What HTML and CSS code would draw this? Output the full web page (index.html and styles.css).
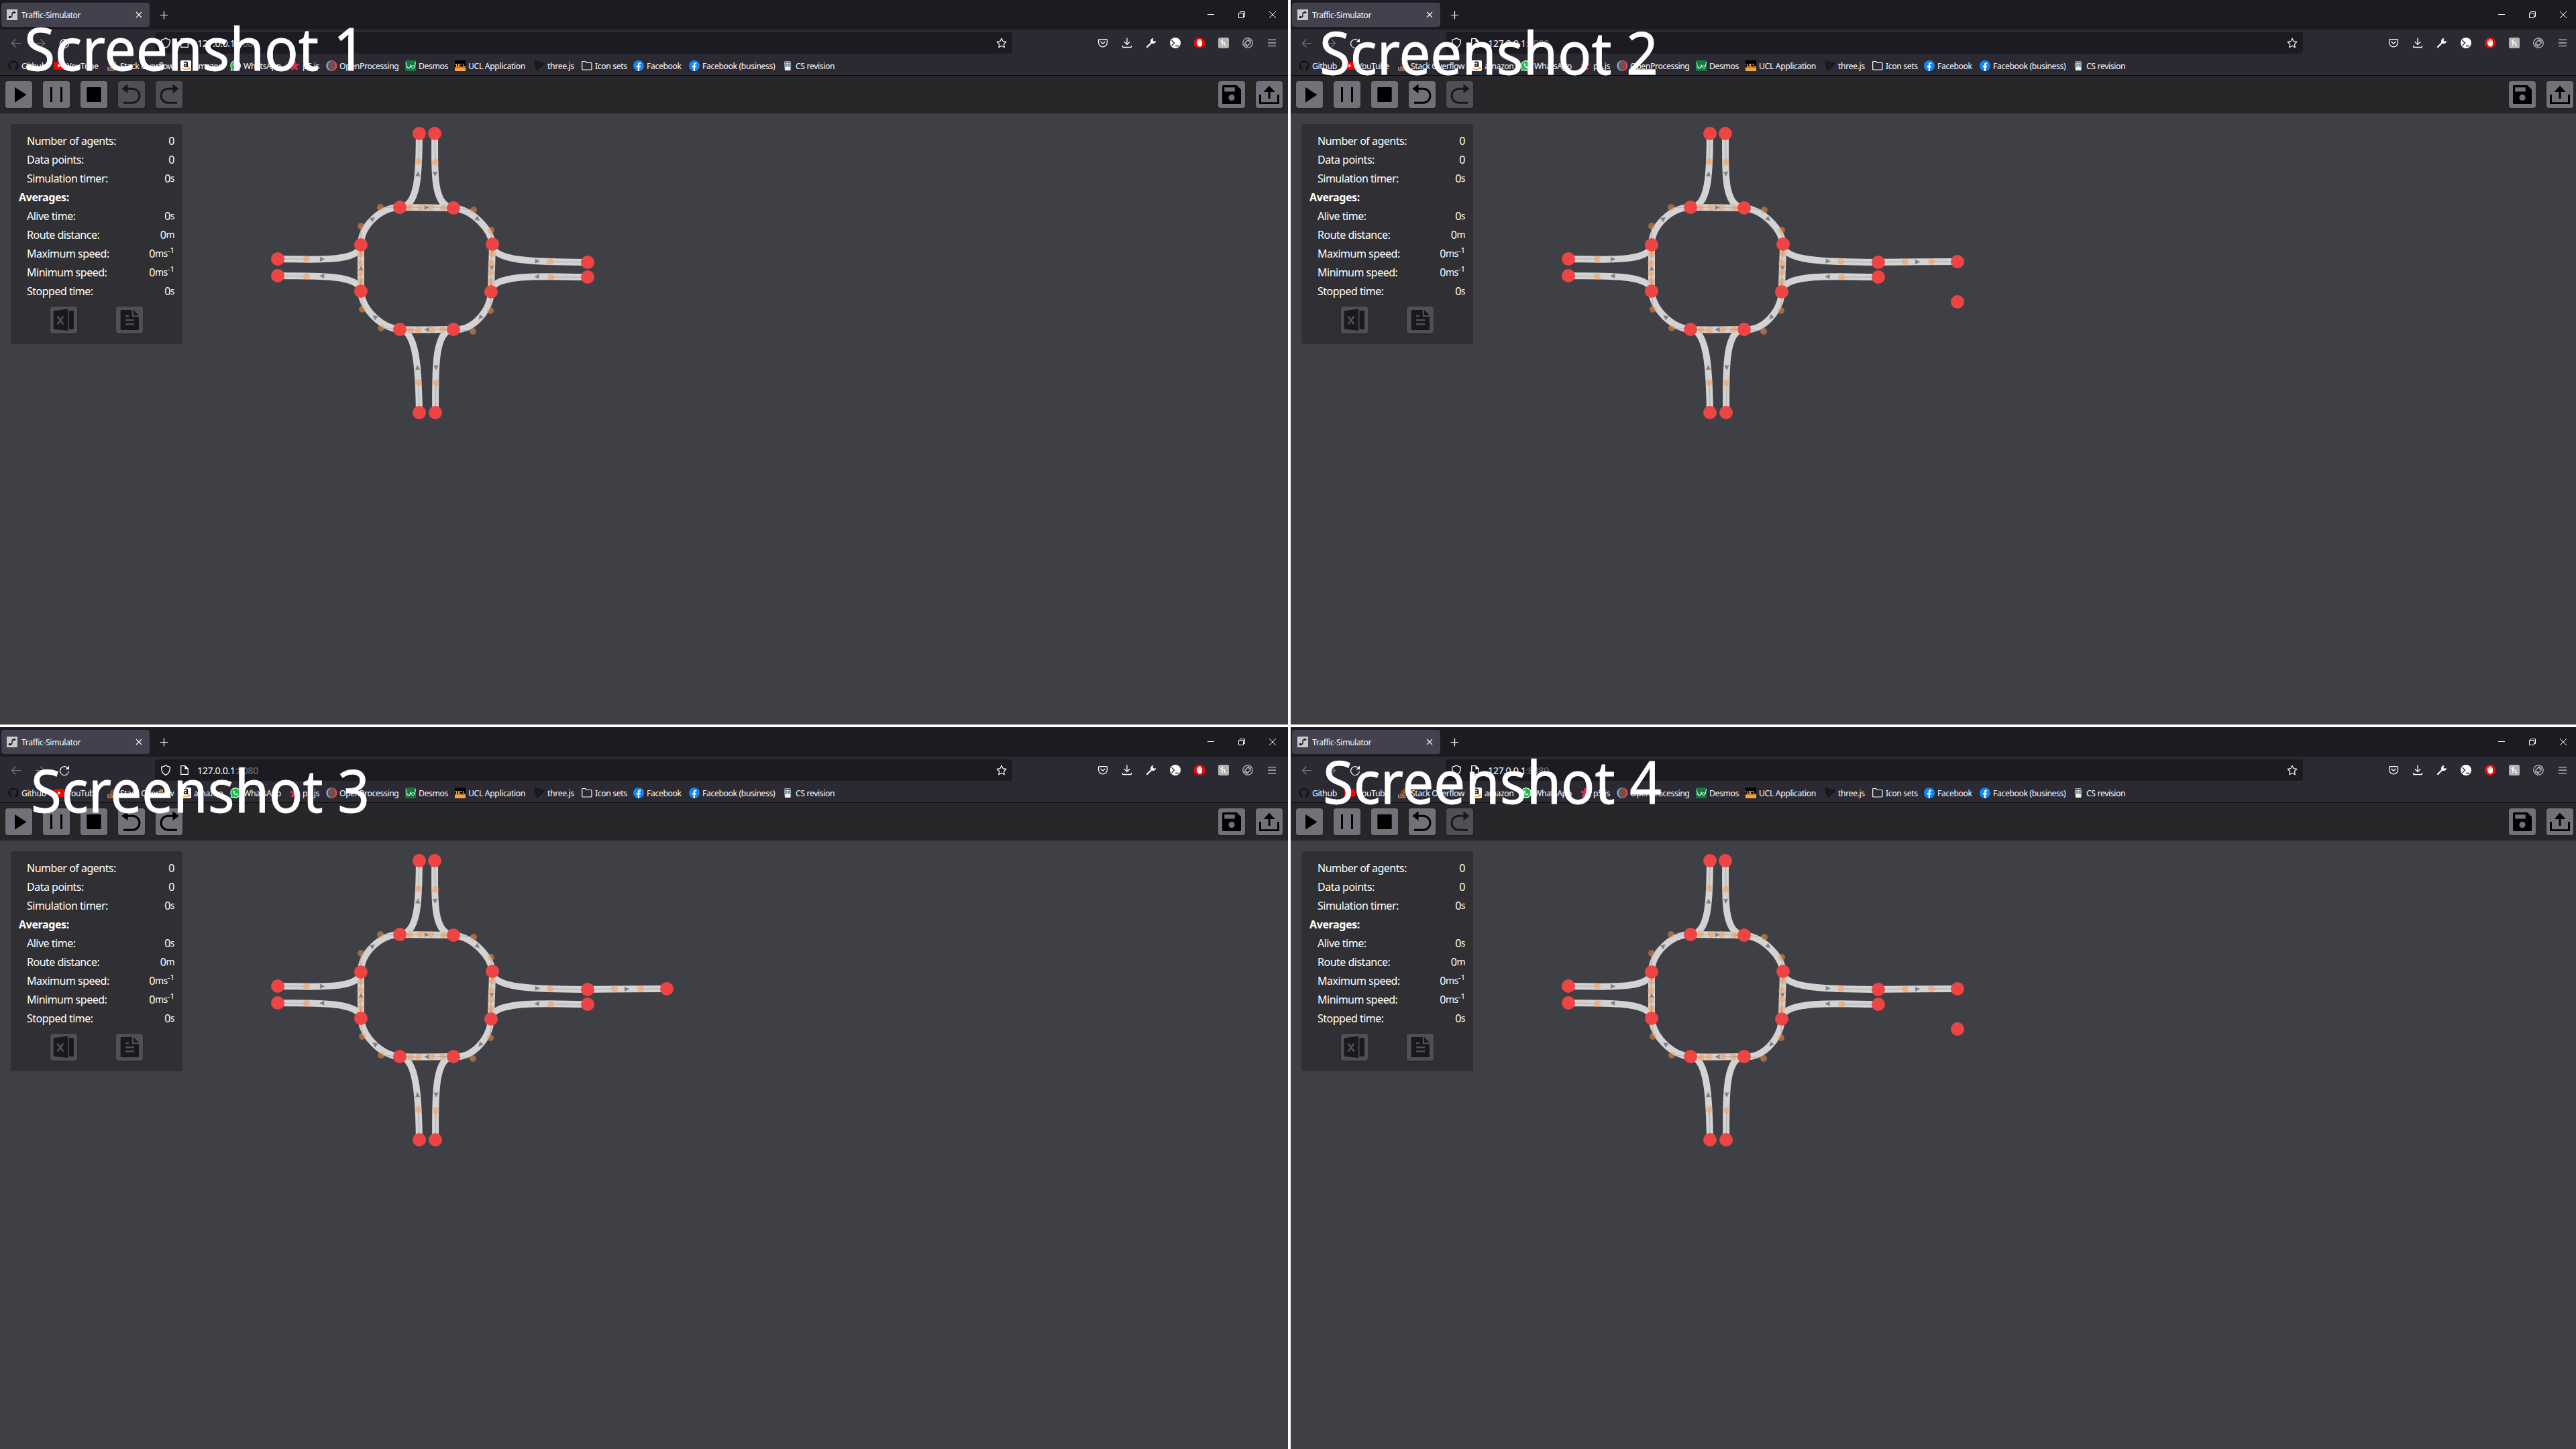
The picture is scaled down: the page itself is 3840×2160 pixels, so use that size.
FILE: index.html
```html
<!DOCTYPE html>
<html lang="en">
<head>
<meta charset="utf-8">
<title>Traffic-Simulator</title>
<link rel="stylesheet" href="styles.css">
</head>
<body>
<svg class="defs" width="0" height="0">
  <symbol id="i-route" viewBox="0 0 16 16"><rect width="16" height="16" fill="#c9c9c9"/><path d="M4.5 11.5H6.5Q8 11.5 8 9V7Q8 4.500 10 4.500H11.500" fill="none" stroke="#111" stroke-width="1.300"/><circle cx="4.500" cy="11.500" r="1.700" fill="#111"/><path d="M10.500 2.500L14 4.500L10.500 6.500Z" fill="#111"/></symbol>
  <symbol id="i-x" viewBox="0 0 16 16"><path d="M4 4L12 12M12 4L4 12" stroke="#fbfbfe" stroke-width="1.100"/></symbol>
  <symbol id="i-plus" viewBox="0 0 16 16"><path d="M2.500 8.500H14M8.500 2.500V14.500" stroke="#fbfbfe" stroke-width="1.200"/></symbol>
  <symbol id="i-min" viewBox="0 0 16 16"><path d="M3 7.500H13" stroke="#fff"/></symbol>
  <symbol id="i-restore" viewBox="0 0 16 16"><path d="M3.500 5.500H10.500V12.500H3.500ZM5.500 5V3.500H12.500V10.500H11" fill="none" stroke="#fff"/></symbol>
  <symbol id="i-close" viewBox="0 0 16 16"><path d="M3 3L13 13M13 3L3 13" stroke="#fff"/></symbol>
  <symbol id="i-back" viewBox="0 0 16 16"><path d="M15 8.500H1.500M7.500 2.500L1.500 8.500L7.500 14.500" fill="none" stroke="#77767e" stroke-width="1.200"/></symbol>
  <symbol id="i-forward" viewBox="0 0 16 16"><path d="M1 8.500H14.500M8.500 2.500L14.500 8.500L8.500 14.500" fill="none" stroke="#77767e" stroke-width="1.200"/></symbol>
  <symbol id="i-reload" viewBox="0 0 16 16"><path d="M13.500 5.500A6.500 6.500 0 1 0 14.500 10" fill="none" stroke="#fbfbfe" stroke-width="1.300"/><path d="M15 1.500V7H9.500Z" fill="#fbfbfe"/></symbol>
  <symbol id="i-shield" viewBox="0 0 16 16"><path d="M8 .7C10 2.400 12.500 3 14.300 3.300C14.600 9 12.500 13.500 8 15.400C3.500 13.500 1.400 9 1.700 3.300C3.500 3 6 2.400 8 .7Z" fill="none" stroke="#fbfbfe" stroke-width="1.300"/></symbol>
  <symbol id="i-page" viewBox="0 0 16 16"><path d="M2.700 1.600H9L13.300 6V14.400H2.700Z" fill="none" stroke="#fbfbfe" stroke-width="1.300" stroke-linejoin="round"/><path d="M8.500 1V6.500H14Z" fill="#fbfbfe"/></symbol>
  <symbol id="i-star" viewBox="0 0 16 16"><path d="M8 1.200L10.100 5.600L14.900 6.300L11.400 9.700L12.200 14.700L8 12.300L3.800 14.700L4.600 9.700L1.100 6.300L5.900 5.600Z" fill="none" stroke="#fbfbfe" stroke-width="1.200" stroke-linejoin="round"/></symbol>
  <symbol id="i-pocket" viewBox="0 0 16 16"><path d="M2.700 2.600H13.300Q14.400 2.600 14.400 3.700V7.500A6.400 6.400 0 0 1 1.600 7.500V3.700Q1.600 2.600 2.700 2.600ZM5 6.300L8 9.200L11 6.300" fill="none" stroke="#fbfbfe" stroke-width="1.300" stroke-linecap="round"/></symbol>
  <symbol id="i-download" viewBox="0 0 16 16"><path d="M8 .5V10M3.800 6.200L8 10.400L12.200 6.200M1.500 12V13.500Q1.500 14.500 2.500 14.500H13.500Q14.500 14.500 14.500 13.500V12" fill="none" stroke="#fbfbfe" stroke-width="1.300"/></symbol>
  <symbol id="i-wrench" viewBox="0 0 16 16"><path d="M2 14L9 7" stroke="#fbfbfe" stroke-width="2.300" stroke-linecap="round"/><path d="M11.500 1A4 4 0 1 0 15 4.800L12.300 6L10.300 4Z" fill="#fbfbfe"/></symbol>
  <symbol id="i-term" viewBox="0 0 16 16"><circle cx="8" cy="8" r="8" fill="#fff"/><path d="M2.500 4L6.500 8L2.500 12M8 12.500H13" fill="none" stroke="#222" stroke-width="1.300"/></symbol>
  <symbol id="i-hand" viewBox="0 0 16 16"><path d="M4.700 0H11.300L16 4.700V11.300L11.300 16H4.700L0 11.300V4.700Z" fill="#e40d0d"/><path d="M5 5V9M7 3V9M9 3V9M11 5V9" stroke="#fff" stroke-width="1.600" stroke-linecap="round"/><path d="M4.200 7.500H12V10Q11.500 13.500 8 13.500Q5.500 13 4.200 9Z" fill="#fff"/></symbol>
  <symbol id="i-honey" viewBox="0 0 16 16"><rect width="16" height="16" rx="2.500" fill="#b3b3b3"/><path d="M3.500 5.500Q7 5 6.500 3Q5.500 3 6 12M6.200 9Q8.500 6 9.500 8Q9 13 12 11.500" fill="none" stroke="#fff" stroke-width="1.300"/></symbol>
  <symbol id="i-shutter" viewBox="0 0 16 16"><circle cx="8" cy="8" r="7.200" fill="none" stroke="#aaa" stroke-width="1.500"/><path d="M4 12V8L9.500 2.500M7 4H10V7M12 4V8L6.500 13.500M9 12H6V9" fill="none" stroke="#c4c4c4" stroke-width="1.300"/></symbol>
  <symbol id="i-menu" viewBox="0 0 16 16"><path d="M2 3.500H14M2 8H14M2 12.500H14" stroke="#fbfbfe" stroke-width="1.100"/></symbol>

  <symbol id="b-github" viewBox="0 0 16 16"><path d="M8 .3A7.700 7.700 0 0 0 5.500 15.300V13.400C3.300 13.700 3.200 12 2.300 11.600C3.800 11.500 4 13 5.500 12.300Q5.600 11.500 6 11C3.500 10.500 3.200 9 3.200 7.200Q3.200 6 4 5.100Q3.700 4 4.100 3Q5.200 3.100 6.200 3.800Q8 3.300 9.800 3.800Q10.800 3.100 11.900 3Q12.300 4 12 5.100Q12.800 6 12.800 7.200C12.800 9 12.500 10.500 10 11Q10.500 11.600 10.500 12.500V15.300A7.700 7.700 0 0 0 8 .3Z" fill="#151517"/></symbol>
  <symbol id="b-youtube" viewBox="0 0 16 16"><rect y="2.300" width="16" height="11.400" rx="2.600" fill="#f00"/><path d="M6.300 5.600V10.400L10.500 8Z" fill="#fff"/></symbol>
  <symbol id="b-stack" viewBox="0 0 16 16"><path d="M2 10V15H11.500V10" fill="none" stroke="#bcbbbb" stroke-width="1.200"/><path d="M3.800 12.800H10M4 10.500L10.200 11.600M4.800 7.700L10.700 10M6.400 4.700L11.500 8.600M9 2L12.500 7.200M12.400 .5L13.800 6.500" stroke="#f48024" stroke-width="1.200"/></symbol>
  <symbol id="b-amazon" viewBox="0 0 16 16"><rect width="16" height="16" rx="2" fill="#fff"/><path d="M5.300 3.800Q6 2.300 8 2.300Q10.300 2.300 10.300 4.300V8.500Q10.300 9.300 11 9.700M10 5.500Q5.500 5.300 5.500 7.700Q5.700 9.500 7.500 9.300Q9.500 9 10 6.500" fill="none" stroke="#111" stroke-width="1.700"/><path d="M2 11.500Q8 15.500 13 12M11.500 11.200L14 11.300L13.200 13.600" fill="none" stroke="#f90" stroke-width="1.400"/></symbol>
  <symbol id="b-whatsapp" viewBox="0 0 16 16"><path d="M.5 15.700L1.500 12A7.800 7.800 0 1 1 4.300 14.700Z" fill="#fff"/><path d="M1.800 14.300L2.600 11.600A6.500 6.500 0 1 1 4.700 13.500Z" fill="#0fc144"/><path d="M5 5Q5.500 3.800 6.300 4.800L7 6.200L6.300 7.300Q7.200 9 8.900 9.700L9.900 8.900L11.600 9.800Q11.500 11.600 9.600 11.600Q5.500 10.800 5 6.500Z" fill="#fff"/></symbol>
  <symbol id="b-p5" viewBox="0 0 16 16"><path d="M8 1V8L14 6M8 8L12 14M8 8L4 14M8 8L2 6" fill="none" stroke="#ed225d" stroke-width="3.400"/></symbol>
  <symbol id="b-op" viewBox="0 0 16 16"><circle cx="8" cy="8" r="7.800" fill="#6db3d6"/><path d="M8.500 .2A7.800 7.800 0 0 1 8.500 15.800Z" fill="#ee4c48"/><ellipse cx="8.500" cy="8" rx="5.800" ry="6.900" fill="#7b4b4c"/></symbol>
  <symbol id="b-desmos" viewBox="0 0 16 16"><rect width="16" height="16" rx="1.500" fill="#12793d"/><path d="M1 3Q3 12 6 12Q8 11.500 8 6.500Q9 12 12 12Q14.500 11 15.500 2M1 9.500Q4.500 13 8 9.500T15 9.500" fill="none" stroke="#e8f5ea" stroke-width="1"/></symbol>
  <symbol id="b-ucl" viewBox="0 0 16 16"><rect width="16" height="10.500" fill="#000"/><rect y="10.300" width="16" height="5.700" fill="#f7a145"/><path d="M2.500 5V9.500H5.500V5M11 5.500H7.500V9.500H10.500M12.500 5V9.500H16M.3 5V7" fill="none" stroke="#f7a145" stroke-width="1.200"/></symbol>
  <symbol id="b-three" viewBox="0 0 16 16"><path d="M.5 .5L15.500 4.500L4.500 15.500ZM2.500 8L8 2.500L10 10ZM1.500 4.500L4.500 1.500L6 12L12 3.500L13 7L1.500 4.500M3.500 12L5.500 5.500L11.500 7" fill="none" stroke="#131315" stroke-width="1.100"/></symbol>
  <symbol id="b-folder" viewBox="0 0 16 16"><path d="M.7 13V2.500Q.7 1.500 1.700 1.500H5.500L7.300 3.500H14Q15 3.500 15 4.500V13Q15 14 14 14H1.700Q.7 14 .7 13Z" fill="none" stroke="#fbfbfe" stroke-width="1.200"/></symbol>
  <symbol id="b-fb" viewBox="0 0 16 16"><circle cx="8" cy="8" r="8" fill="#0f86f5"/><path d="M6.800 16V10.200H4.800V8H6.800V6.200Q6.800 3.500 9.500 3.500H11.200V5.500H10Q9 5.500 9 6.600V8H11.100L10.700 10.200H9V16Z" fill="#fff"/></symbol>
  <symbol id="b-cs" viewBox="0 0 16 16"><path d="M3 3H13L12.500 15H4Z" fill="#eee"/><path d="M3.500 1.500H12.500M3 3.500H13" stroke="#aaa"/><circle cx="5" cy="7" r="2.300" fill="#7ac0c0" stroke="#555" stroke-width=".8"/><circle cx="11" cy="7" r="2.300" fill="#7ac0c0" stroke="#555" stroke-width=".8"/></symbol>

  <symbol id="t-play" viewBox="0 0 40 40"><path d="M14 9L31.500 20.300L14 31.700Z"/></symbol>
  <symbol id="t-pause" viewBox="0 0 40 40"><path d="M11 9H14V31H11ZM26 9H29V31H26Z"/></symbol>
  <symbol id="t-stop" viewBox="0 0 40 40"><rect x="9.300" y="9" width="21.400" height="22" rx="1.200"/></symbol>
  <symbol id="t-undo" viewBox="0 0 40 40"><path d="M5.300 11.200L14.500 4.300V18.300Z"/><path d="M13 11.200H21.500A10.500 10.500 0 0 1 21.500 32.200H8" fill="none" stroke="currentColor" stroke-width="3"/></symbol>
  <symbol id="t-redo" viewBox="0 0 40 40"><path d="M34.700 11.200L25.500 4.300V18.300Z"/><path d="M27 11.200H18.500A10.500 10.500 0 0 0 18.500 32.200H32" fill="none" stroke="currentColor" stroke-width="3"/></symbol>
  <symbol id="t-save" viewBox="0 0 40 40"><path fill-rule="evenodd" d="M7.500 6H27.500L34 12.500V32.500Q34 34 32.500 34H7.500Q6 34 6 32.500V7.500Q6 6 7.500 6ZM9.200 9.300V15.500H24.800V9.300ZM20 19.800A4.600 4.600 0 1 0 20 29A4.600 4.600 0 1 0 20 19.800Z"/></symbol>
  <symbol id="t-export" viewBox="0 0 40 40"><path d="M20 6.700L28.700 15.900H11.700ZM18.600 15H21.600V26H18.600ZM5 20H8V31.200H32V20H35V34H5Z"/></symbol>
  <symbol id="t-excel" viewBox="0 0 40 40"><path d="M4.700 6.500L26 3.500V36L4.700 33.500ZM27.500 6.300H34Q35 6.300 35 7.300V32.700Q35 33.700 34 33.700H27.500Z"/><path d="M10.500 14.500L19.500 26.500M19.500 14.500L10.500 26.500" stroke="#4f4f54" stroke-width="2.800"/></symbol>
  <symbol id="t-doc" viewBox="0 0 40 40"><path d="M8 5H23.700V15.300H34V33.700Q34 35 32.700 35H8Q6.700 35 6.700 33.700V6.300Q6.700 5 8 5ZM26 5L34 13H26Z"/><path d="M14 14H19M14 20.200H27M14 26.200H27" stroke="#4f4f54" stroke-width="2.500"/></symbol>
</svg>

<main class="board"></main>

<template id="window">
  <section class="window">
    <header class="tabs">
      <div class="tab"><svg class="ico"><use href="#i-route"/></svg><span class="tab-title">Traffic-Simulator</span><svg class="ico"><use href="#i-x"/></svg></div>
      <svg class="ico new-tab"><use href="#i-plus"/></svg>
      <div class="controls">
        <span><svg class="ico"><use href="#i-min"/></svg></span><span><svg class="ico"><use href="#i-restore"/></svg></span><span><svg class="ico"><use href="#i-close"/></svg></span>
      </div>
    </header>
    <nav class="nav">
      <span class="cell"><svg class="ico"><use href="#i-back"/></svg></span>
      <span class="cell"><svg class="ico"><use href="#i-forward"/></svg></span>
      <span class="cell"><svg class="ico"><use href="#i-reload"/></svg></span>
      <div class="url"><svg class="ico"><use href="#i-shield"/></svg><svg class="ico page"><use href="#i-page"/></svg><span class="address">127.0.0.1<span class="port">:8080</span></span><svg class="ico star"><use href="#i-star"/></svg></div>
      <div class="extensions"></div>
    </nav>
    <div class="bookmarks"></div>
    <div class="toolbar">
      <button class="btn"><svg><use href="#t-play"/></svg></button>
      <button class="btn"><svg><use href="#t-pause"/></svg></button>
      <button class="btn"><svg><use href="#t-stop"/></svg></button>
      <button class="btn undo"><svg><use href="#t-undo"/></svg></button>
      <button class="btn redo"><svg><use href="#t-redo"/></svg></button>
      <button class="btn save"><svg><use href="#t-save"/></svg></button>
      <button class="btn"><svg><use href="#t-export"/></svg></button>
    </div>
    <div class="canvas">
      <svg class="roads" width="1920" height="911"><g transform="translate(390 1) scale(.33333)"></g></svg>
      <aside class="stats">
        <dl class="rows"></dl>
        <div class="exports">
          <button class="btn off"><svg><use href="#t-excel"/></svg></button>
          <button class="btn off"><svg><use href="#t-doc"/></svg></button>
        </div>
      </aside>
    </div>
    <h2 class="caption"></h2>
  </section>
</template>
<script src="app.js"></script>
</body>
</html>
```
FILE: styles.css
```css
* { box-sizing: border-box; }
body { margin: 0; background: #fff; font-family: "Noto Sans", "Open Sans", sans-serif; color: #fbfbfe; overflow: hidden; }
.defs { position: absolute; }
.board { display: grid; width: 3840px; height: 2160px; grid-template: 1080px 1076px / 1920px 1916px; gap: 4px; }
.window { position: relative; overflow: hidden; background: #3f4046; }
.window > * { width: 1920px; }
.ico { width: 16px; height: 16px; flex: none; display: block; }

.tabs { height: 44px; background: #1c1b22; display: flex; align-items: center; padding-left: 2px; }
.tab { width: 221px; height: 36px; border-radius: 4px; background: #42414d; display: flex; align-items: center; padding: 0 8px; }
.tab-title { flex: 1; margin-left: 6px; font-size: 12.2px; letter-spacing: -.38px; }
.new-tab { margin-left: 13px; }
.controls { margin-left: auto; display: flex; }
.controls span { width: 46px; height: 44px; display: grid; place-items: center; }

.nav { height: 40px; background: #2b2a33; display: flex; align-items: center; padding: 0 6px; }
.cell { width: 36px; display: grid; place-items: center; }
.url { width: 1278px; height: 32px; margin: 0 0 0 117px; background: #1c1b22; border-radius: 4px; display: flex; align-items: center; padding: 0 8px; }
.page { margin-left: 12px; }
.address { margin-left: 11px; font-size: 14.400px; letter-spacing: -.5px; }
.port { color: #77767e; }
.star { margin-left: auto; }
.extensions { margin-left: auto; display: flex; }

.bookmarks { height: 29px; background: #2b2a33; border-bottom: 1px solid #0c0c0d; display: flex; align-items: center; padding: 0 0 0 12px; }
.bookmark { display: flex; align-items: center; gap: 4px; font-size: 12.200px; letter-spacing: -.36px; white-space: nowrap; flex: none; }

.toolbar { height: 56px; background: #272729; display: flex; align-items: center; gap: 16px; padding: 0 8px; }
.btn { width: 40px; height: 40px; padding: 0; border: 0; border-radius: 4px; background: #71717a; color: #000; box-shadow: 0 1px 3px #0003; }
.btn svg { width: 40px; height: 40px; display: block; fill: currentColor; }
.btn.off { background: #4f4f54; color: #19191b; }
.save { margin-left: auto; }

.canvas { position: relative; height: 911px; padding: 16px; }
.roads { position: absolute; left: 0; top: 0; }
.road { fill: none; stroke: #d3d3d3; stroke-width: 30; }
.lever { stroke: #80808050; stroke-width: 5; }
.handle { fill: #fd9648; fill-opacity: .5; }
.arrow { fill: #808080; }
.node { fill: #ef4444; }

.stats { position: relative; width: 256px; height: 328px; padding: 11px 12px 12px; border-radius: 4px; background: #303034; color: #fff; }
.rows { margin: 0; }
.row { display: flex; justify-content: space-between; height: 28px; line-height: 28px; padding-left: 12px; font-size: 16px; letter-spacing: -.5px; }
.row dd { margin: 0; display: flex; }
.row.head { padding-left: 0; font-weight: 700; letter-spacing: -.4px; }
.unit { font-size: 14px; }
.exp { font-size: 11.500px; position: relative; top: -5px; letter-spacing: 0; }
.exports { display: flex; justify-content: center; gap: 58px; padding-top: 9px; }

.caption { position: absolute; width: auto; margin: 0; color: #fff; font-weight: 400; font-size: 87px; line-height: 100px; white-space: nowrap; transform-origin: 0 0; -webkit-text-stroke: .8px #fff; }
```
FILE: app.js
```js
const NS = 'http://www.w3.org/2000/svg';

const windows = [
  { title: 'Screenshot 1', x: 36, y: 21, stretch: .965, undo: false, redo: false, road: false, node: false },
  { title: 'Screenshot 2', x: 43, y: 27, stretch: .957, undo: true, redo: false, road: true, node: true },
  { title: 'Screenshot 3', x: 46, y: 43, stretch: .957, undo: true, redo: true, road: true, node: false },
  { title: 'Screenshot 4', x: 48, y: 30, stretch: .957, undo: true, redo: false, road: true, node: true }
];

const extensions = ['pocket', 'download', 'wrench', 'term', 'hand', 'honey', 'shutter', 'menu'];

const bookmarks = [
  ['github', 'Github', 68], ['youtube', 'YouTube', 79], ['stack', 'Stack Overflow', 110],
  ['amazon', 'amazon', 74], ['whatsapp', 'WhatsApp', 88], ['p5', 'p5.js', 55],
  ['op', 'OpenProcessing', 118], ['desmos', 'Desmos', 74], ['ucl', 'UCL Application', 118],
  ['three', 'three.js', 71], ['folder', 'Icon sets', 77], ['fb', 'Facebook', 83],
  ['fb', 'Facebook (business)', 139], ['cs', 'CS revision', 90]
];

const stats = [
  ['Number of agents:', '0'], ['Data points:', '0'], ['Simulation timer:', '0', 's'],
  ['Averages:'],
  ['Alive time:', '0', 's'], ['Route distance:', '0', 'm'],
  ['Maximum speed:', '0', 'ms', '-1'], ['Minimum speed:', '0', 'ms', '-1'],
  ['Stopped time:', '0', 's']
];

// start, first control, second control, end, arrow centre and heading in degrees
const roads = [
  [618, 417, 711, 417, 702, 213, 705, 87, 699, 267, -86],
  [774, 87, 777, 216, 756, 417, 858, 420, 776, 269, 88],
  [618, 417, 663, 417, 813, 420, 858, 420, 739, 418, 0],
  [858, 420, 948, 429, 1026, 519, 1032, 582, 967, 471, 40],
  [1032, 582, 1032, 625, 1026, 750, 1026, 795, 1029, 689, 91],
  [1032, 582, 1026, 669, 1290, 660, 1458, 663, 1234, 658, 3],
  [1458, 729, 1293, 729, 1026, 708, 1026, 795, 1230, 727, 178],
  [1026, 795, 1023, 879, 945, 972, 858, 963, 977, 910, 130],
  [858, 963, 810, 963, 666, 966, 618, 963, 738, 964, 180],
  [858, 963, 762, 963, 780, 1203, 777, 1335, 780, 1135, 91],
  [705, 1335, 702, 1200, 702, 966, 618, 963, 697, 1133, -94],
  [618, 963, 534, 957, 450, 873, 444, 792, 505, 907, -143],
  [444, 792, 444, 747, 444, 627, 444, 585, 444, 689, -90],
  [444, 585, 444, 501, 531, 417, 618, 417, 498, 468, -38],
  [72, 648, 201, 648, 441, 669, 444, 585, 272, 649, 0],
  [444, 792, 441, 711, 201, 726, 72, 723, 269, 724, 180]
];
const extraRoad = [1458, 663, 1578, 660, 1695, 660, 1812, 660, 1634, 661, 0];

function draw(parent, tag, attrs) {
  const el = document.createElementNS(NS, tag);
  for (const key in attrs) el.setAttribute(key, attrs[key]);
  parent.appendChild(el);
}

function drawRoads(layer, list, loneNode) {
  for (const [a, b, c, d, e, f, g, h] of list)
    draw(layer, 'path', { class: 'road', d: `M${a} ${b}C${c} ${d} ${e} ${f} ${g} ${h}` });
  for (const [a, b, c, d, e, f, g, h, x, y, angle] of list) {
    draw(layer, 'path', { class: 'lever', d: `M${a} ${b}L${c} ${d}M${g} ${h}L${e} ${f}` });
    draw(layer, 'path', { class: 'arrow', d: 'M-11 -11L11 0L-11 11Z', transform: `translate(${x} ${y}) rotate(${angle})` });
    draw(layer, 'circle', { class: 'handle', cx: c, cy: d, r: 15 });
    draw(layer, 'circle', { class: 'handle', cx: e, cy: f, r: 15 });
  }
  const nodes = new Set();
  for (const r of list) nodes.add(r[0] + ',' + r[1]).add(r[6] + ',' + r[7]);
  if (loneNode) nodes.add('1812,840');
  for (const n of nodes) {
    const [cx, cy] = n.split(',');
    draw(layer, 'circle', { class: 'node', cx, cy, r: 30 });
  }
}

const board = document.querySelector('.board');
const template = document.getElementById('window');

for (const w of windows) {
  const view = template.content.cloneNode(true);
  view.querySelector('.extensions').innerHTML = extensions
    .map(id => `<span class="cell"><svg class="ico"><use href="#i-${id}"/></svg></span>`).join('');
  view.querySelector('.bookmarks').innerHTML = bookmarks
    .map(([id, label, width]) => `<div class="bookmark" style="width:${width}px"><svg class="ico"><use href="#b-${id}"/></svg><span>${label}</span></div>`).join('');
  view.querySelector('.rows').innerHTML = stats
    .map(([label, value, unit, exp]) => value === undefined
      ? `<div class="row head"><dt>${label}</dt></div>`
      : `<div class="row"><dt>${label}</dt><dd>${value}${unit ? `<span class="unit">${unit}</span>` : ''}${exp ? `<span class="exp">${exp}</span>` : ''}</dd></div>`).join('');
  if (!w.undo) view.querySelector('.undo').classList.add('off');
  if (!w.redo) view.querySelector('.redo').classList.add('off');
  drawRoads(view.querySelector('.roads g'), w.road ? [...roads, extraRoad] : roads, w.node);
  const caption = view.querySelector('.caption');
  caption.textContent = w.title;
  caption.style.left = w.x + 'px';
  caption.style.top = w.y + 'px';
  caption.style.transform = `scaleX(${w.stretch})`;
  board.appendChild(view);
}
```
